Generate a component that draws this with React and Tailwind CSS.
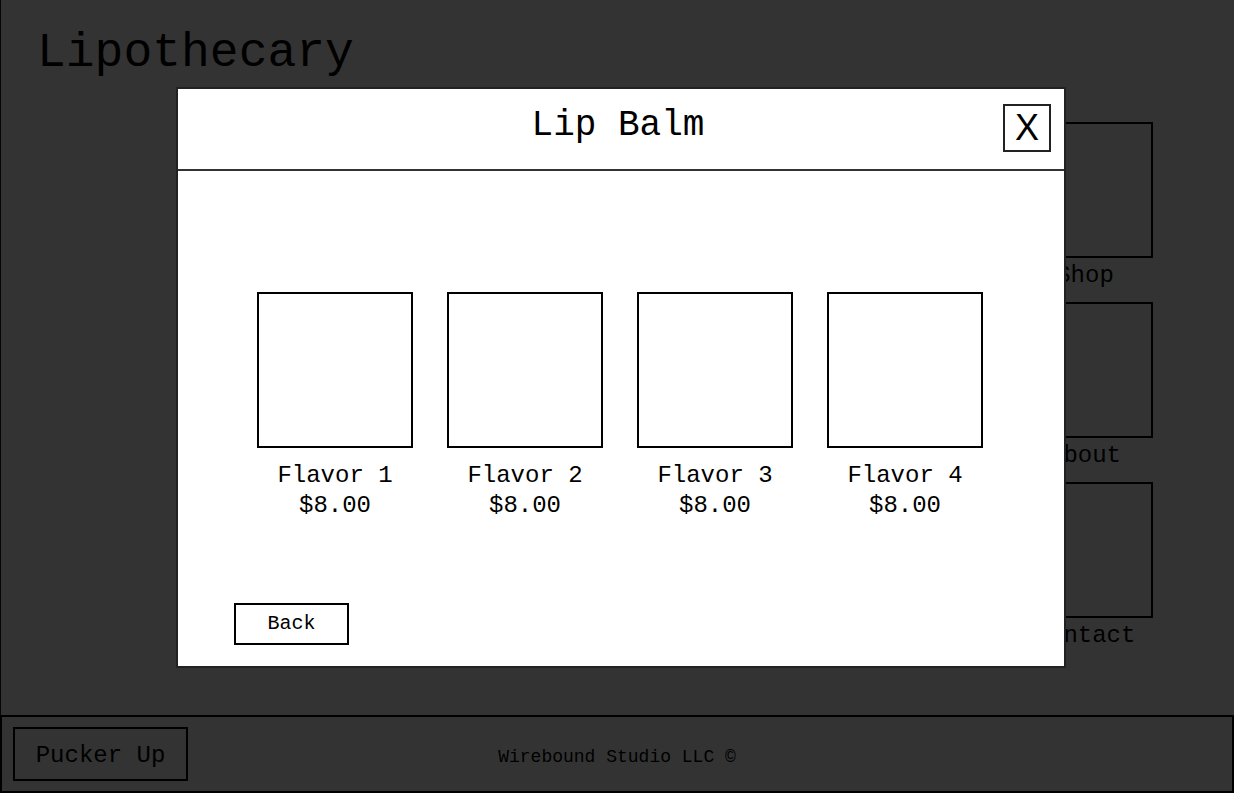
import React from "react";

const mono = { fontFamily: '"Courier New", Courier, "Liberation Mono", monospace' };

function NavItem({ label }) {
  return (
    <div className="flex flex-col items-center mb-[11px]">
      <div className="w-[136px] h-[136px] border-2 border-black" />
      <div className="mt-[3px] text-[24px] leading-[30px] text-black">{label}</div>
    </div>
  );
}

function Flavor({ n }) {
  return (
    <div className="flex flex-col items-center w-[156px]">
      <div className="w-[156px] h-[156px] border-2 border-black bg-white" />
      <div className="mt-[13px] text-[24px] leading-[30px] text-black">Flavor {n}</div>
      <div className="text-[24px] leading-[30px] text-black">$8.00</div>
    </div>
  );
}

export default function App() {
  return (
    <div className="relative w-full h-[793px] overflow-hidden bg-white flex flex-col" style={mono}>
      <div className="flex-1 flex flex-col border-l border-[#222]">
        <h1 className="pl-[36px] pt-[29px] text-[48px] leading-[48px] text-black">Lipothecary</h1>
        <div className="ml-auto mr-[81px] mt-[45px] flex flex-col">
          <NavItem label="Shop" />
          <NavItem label="About" />
          <NavItem label="Contact" />
        </div>
      </div>
      <footer className="h-[78px] border-2 border-black grid grid-cols-[1fr_auto_1fr] items-start pl-[11px] pt-[10px]">
        <div>
          <div className="w-[175px] h-[54px] border-2 border-black flex items-center justify-center text-[24px] text-black pt-[3px]">
            Pucker Up
          </div>
        </div>
        <div className="mt-[18px] text-[18px] leading-[24px] text-black -ml-[11px]">Wirebound Studio LLC ©</div>
        <div />
      </footer>

      <div className="absolute inset-0 bg-black/80">
        <div className="absolute left-[176px] top-[87px] w-[890px] h-[581px] bg-white border-2 border-[#222] flex flex-col">
          <div className="relative h-[82px] border-b-2 border-[#333] flex items-center justify-center">
            <div className="text-[36px] leading-[40px] text-black -mt-[6px] -ml-[6px]">Lip Balm</div>
            <button
              className="absolute right-[13px] top-[15px] w-[48px] h-[48px] border-2 border-[#222] bg-white flex items-center justify-center text-[36px] leading-none text-black"
              style={{ fontFamily: '"Liberation Sans", Arial, sans-serif' }}
            >
              X
            </button>
          </div>
          <div className="flex-1 flex flex-col">
            <div className="mt-[121px] flex justify-center gap-[34px] pr-[2px]">
              <Flavor n={1} />
              <Flavor n={2} />
              <Flavor n={3} />
              <Flavor n={4} />
            </div>
            <div className="mt-[82px] ml-[56px]">
              <button className="w-[115px] h-[42px] border-2 border-black bg-white text-[20px] leading-none text-black" style={mono}>
                Back
              </button>
            </div>
          </div>
        </div>
      </div>
    </div>
  );
}
